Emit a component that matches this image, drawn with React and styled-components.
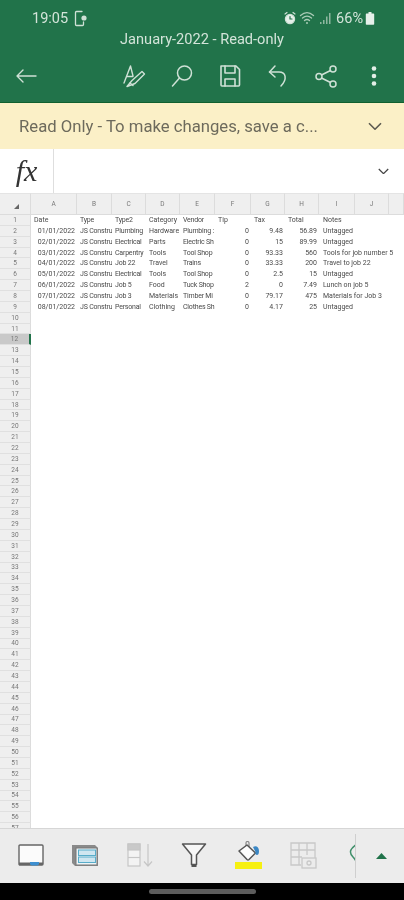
import React from 'react';
import styled, { createGlobalStyle } from 'styled-components';

const GlobalStyle = createGlobalStyle`
  html, body {
    margin: 0;
    padding: 0;
    background: #fff;
    font-family: Roboto, "Liberation Sans", sans-serif;
  }
`;

const Phone = styled.div`
  width: 404px;
  height: 900px;
  display: flex;
  flex-direction: column;
  overflow: hidden;
  filter: blur(0.55px);
`;

const Header = styled.header`
  height: 102px;
  flex: none;
  background: #21734a;
  border-bottom: 1px solid #10602f;
  color: #d3e4d9;
  display: flex;
  flex-direction: column;
`;

const StatusBar = styled.div`
  height: 20px;
  margin-top: 8px;
  padding: 0 29px 0 32px;
  display: flex;
  align-items: center;
  font-size: 14.5px;
  gap: 4px;
`;

const StatusRight = styled.div`
  margin-left: auto;
  display: flex;
  align-items: center;
  gap: 2px;
`;

const Percent = styled.span`
  margin-left: 3px;
`;

const Title = styled.div`
  height: 22px;
  line-height: 22px;
  text-align: center;
  font-size: 14.6px;
`;

const ActionBar = styled.div`
  flex: 1;
  display: flex;
  align-items: center;
  padding: 0 6px 0 2px;
`;

const ActionGroup = styled.div`
  margin-left: auto;
  display: flex;
`;

const ActionButton = styled.div`
  width: 48px;
  height: 40px;
  display: flex;
  align-items: center;
  justify-content: center;
`;

const Banner = styled.div`
  height: 46px;
  flex: none;
  background: #fbf0c7;
  color: #6d6a5c;
  display: flex;
  align-items: center;
  padding: 0 22px 0 19px;
  font-size: 16.7px;
  justify-content: space-between;
`;

const FormulaBar = styled.div`
  height: 44px;
  flex: none;
  background: #fff;
  display: flex;
  align-items: center;
`;

const FxCell = styled.div`
  width: 53px;
  height: 100%;
  border-right: 1px solid #dedede;
  display: flex;
  align-items: center;
  justify-content: center;
  font-family: "Liberation Serif", serif;
  font-style: italic;
  font-size: 30px;
  color: #333;
`;

const FormulaInput = styled.div`
  flex: 1;
  display: flex;
  justify-content: flex-end;
  padding-right: 15px;
`;

const Sheet = styled.div`
  flex: 1;
  min-height: 0;
  overflow: hidden;
  background: #fff;
  display: grid;
  grid-template-columns: 31px 46px 35px 34px 34px 35px 36px 34px 34px 36px 34px 15px;
  grid-template-rows: 22px;
  grid-auto-rows: 10.87px;
  align-content: start;
  font-size: 7px;
  color: #4a4a4a;
  filter: blur(0.35px);
`;

const ColHead = styled.div`
  background: #efefef;
  border-right: 1px solid #dcdcdc;
  border-bottom: 1px solid #dcdcdc;
  border-top: 1px solid #e4e4e4;
  display: flex;
  align-items: center;
  justify-content: center;
  color: #777;
  font-size: 6.5px;
`;

const Corner = styled(ColHead)`
  padding: 5px 0 0 2px;
`;

const RowHead = styled.div`
  background: ${p => (p.$active ? '#c9c9c9' : '#efefef')};
  border-bottom: 1px solid #e0e0e0;
  border-right: ${p => (p.$active ? '2px solid #21734a' : '1px solid #dcdcdc')};
  color: #777;
  font-size: 6.5px;
  display: flex;
  align-items: center;
  justify-content: center;
`;

const Cell = styled.div`
  line-height: 10.87px;
  white-space: nowrap;
  min-width: 0;
  overflow: ${p => (p.$spill ? 'visible' : 'hidden')};
  padding: ${p => (p.$spill ? '0 0 0 4px' : p.$num ? '0 2px 0 0' : '0 0 0 3px')};
  text-align: ${p => (p.$num ? 'right' : 'left')};
  letter-spacing: ${p => (p.$tight ? '-0.2px' : '0')};
`;

const BottomBar = styled.div`
  height: 55px;
  flex: none;
  background: #ececec;
  border-top: 1px solid #d6d6d6;
  display: flex;
  align-items: center;
  box-sizing: border-box;
`;

const ToolStrip = styled.div`
  width: 355px;
  height: 100%;
  overflow: hidden;
  display: flex;
  align-items: center;
  padding-left: 4px;
  box-sizing: border-box;
  padding-bottom: 2px;
`;

const Tool = styled.div`
  flex: none;
  width: 54.3px;
  display: flex;
  flex-direction: column;
  align-items: center;
`;

const FillSwatch = styled.div`
  width: 27px;
  height: 7px;
  background: #f6f012;
  margin-top: 1px;
`;

const Divider = styled.div`
  width: 1px;
  height: 44px;
  background: #cfcfcf;
`;

const Caret = styled.div`
  flex: 1;
  display: flex;
  justify-content: center;
  padding-left: 2px;
`;

const NavBar = styled.div`
  height: 17px;
  flex: none;
  background: #000;
  display: flex;
  align-items: center;
  justify-content: center;
`;

const HomePill = styled.div`
  width: 107px;
  height: 5px;
  border-radius: 3px;
  background: #5c5c5c;
  margin-left: 1px;
`;

const Chevron = ({ w = 14, color = '#5c5a50' }) => (
  <svg width={w} height={w * 0.6} viewBox="0 0 14 8" fill="none" stroke={color} strokeWidth="1.6">
    <path d="M1 1l6 6 6-6" />
  </svg>
);

const Ico = ({ w = 24, h = 24, children, stroke = '#cfe1d6', sw = 1.5, fill = 'none' }) => (
  <svg width={w} height={h} viewBox={`0 0 ${w} ${h}`} fill={fill} stroke={stroke} strokeWidth={sw} strokeLinecap="round" strokeLinejoin="round">
    {children}
  </svg>
);

const columns = ['A', 'B', 'C', 'D', 'E', 'F', 'G', 'H', 'I', 'J', ''];

// vendor and type strings are cut the way the narrow columns cut them
const rows = [
  ['Date', 'Type', 'Type2', 'Category', 'Vendor', 'Tip', 'Tax', 'Total', 'Notes'],
  ['01/01/2022', 'JS Constru', 'Plumbing', 'Hardware', 'Plumbing :', '0', '9.48', '56.89', 'Untagged'],
  ['02/01/2022', 'JS Constru', 'Electrical', 'Parts', 'Electric Sh', '0', '15', '89.99', 'Untagged'],
  ['03/01/2022', 'JS Constru', 'Carpentry', 'Tools', 'Tool Shop', '0', '93.33', '560', 'Tools for job number 5'],
  ['04/01/2022', 'JS Constru', 'Job 22', 'Travel', 'Trains', '0', '33.33', '200', 'Travel to job 22'],
  ['05/01/2022', 'JS Constru', 'Electrical', 'Tools', 'Tool Shop', '0', '2.5', '15', 'Untagged'],
  ['06/01/2022', 'JS Constru', 'Job 5', 'Food', 'Tuck Shop', '2', '0', '7.49', 'Lunch on job 5'],
  ['07/01/2022', 'JS Constru', 'Job 3', 'Materials', 'Timber Mi', '0', '79.17', '475', 'Materials for Job 3'],
  ['08/01/2022', 'JS Constru', 'Personal', 'Clothing', 'Clothes Sh', '0', '4.17', '25', 'Untagged'],
];

const numericCols = [5, 6, 7];
const tightCols = [1, 2, 4];
const rowCount = 57;

function App() {
  return (
    <Phone>
      <GlobalStyle />
      <Header>
        <StatusBar>
          19:05
          <Ico w={16} h={18} sw={1.3}>
            <path d="M10 2.500H4.500a1 1 0 0 0-1 1v12a1 1 0 0 0 1 1h6a1 1 0 0 0 1-1v-2.500" />
            <circle cx="12" cy="9" r="2.600" fill="#cfe1d6" stroke="none" />
          </Ico>
          <StatusRight>
            <Ico w={14} h={14} sw={1.2}>
              <circle cx="7" cy="8" r="4.600" fill="#e6f0ea" />
              <path d="M2 3l2-1.500M12 3l-2-1.500" />
              <path d="M7 5.500V8h2" stroke="#21734a" />
            </Ico>
            <Ico w={18} h={14} sw={1.3} stroke="#a9cbb6">
              <path d="M1.500 4.500c4-3.500 9-3.500 13 0M3.500 7c3-2.500 6-2.500 9 0M5.500 9.500c1.500-1.200 3.500-1.200 5 0" />
              <circle cx="8" cy="12" r="1" fill="#a9cbb6" stroke="none" />
            </Ico>
            <Ico w={12} h={14} stroke="none" fill="#8fb7a0">
              <path d="M1 13h1.500v-2H1zM4 13h1.500V9H4zM7 13h1.500V5.500H7zM10 13h1.500V2H10z" />
            </Ico>
            <Percent>66%</Percent>
            <Ico w={10} h={14} stroke="none" fill="#e6f0ea">
              <path d="M3.500 1h3v1.500h2a.7.7 0 0 1 .7.7V13a.7.7 0 0 1-.7.7H1.500A.7.7 0 0 1 .8 13V3.200a.7.7 0 0 1 .7-.7h2z" />
            </Ico>
          </StatusRight>
        </StatusBar>
        <Title>January-2022 - Read-only</Title>
        <ActionBar>
          <ActionButton>
            <Ico w={24} h={16} sw={1.4}>
              <path d="M22 8H3M9 2L3 8l6 6" />
            </Ico>
          </ActionButton>
          <ActionGroup>
            <ActionButton>
              <Ico w={24} h={24} sw={1.4}>
                <path d="M2 19L8.500 2l2.500 10M4.500 12.500H11" />
                <path d="M5 22.500l5-6 10-9 2.500 2.500-9.500 9.500z" />
                <path d="M8 19l3 2.500" />
              </Ico>
            </ActionButton>
            <ActionButton>
              <Ico w={24} h={24} sw={1.5}>
                <circle cx="14.500" cy="9" r="7" />
                <path d="M9.500 14L2.500 22" />
              </Ico>
            </ActionButton>
            <ActionButton>
              <Ico w={24} h={24} sw={1.6}>
                <path d="M3 2h15l3.500 3.500V21a1 1 0 0 1-1 1H4a1 1 0 0 1-1-1z" />
                <path d="M7 2v7h10V2M7 22v-7h10v7" />
              </Ico>
            </ActionButton>
            <ActionButton>
              <Ico w={24} h={24} sw={1.5}>
                <path d="M9 2L3.500 8 9 13" />
                <path d="M3.500 8H13c7 0 8.500 7 2 14" />
              </Ico>
            </ActionButton>
            <ActionButton>
              <Ico w={24} h={24} sw={1.5}>
                <circle cx="19" cy="5" r="3" />
                <circle cx="5" cy="12.500" r="3" />
                <circle cx="19" cy="20" r="3" />
                <path d="M16.500 6.500L7.500 11M7.500 14l9 4.500" />
              </Ico>
            </ActionButton>
            <ActionButton>
              <Ico w={6} h={22} stroke="none" fill="#e3eee7">
                <circle cx="3" cy="3.500" r="2.300" />
                <circle cx="3" cy="11" r="2.300" />
                <circle cx="3" cy="18.500" r="2.300" />
              </Ico>
            </ActionButton>
          </ActionGroup>
        </ActionBar>
      </Header>

      <Banner>
        <span>Read Only - To make changes, save a c...</span>
        <Chevron />
      </Banner>

      <FormulaBar>
        <FxCell>fx</FxCell>
        <FormulaInput>
          <Chevron w={11} color="#444" />
        </FormulaInput>
      </FormulaBar>

      <Sheet>
        <Corner>
          <svg width="5" height="5" viewBox="0 0 6 6"><path d="M6 0v6H0z" fill="#666" /></svg>
        </Corner>
        {columns.map((c, i) => <ColHead key={i}>{c}</ColHead>)}
        {Array.from({ length: rowCount }, (_, r) => (
          <React.Fragment key={r}>
            <RowHead $active={r === 11} style={{ gridColumn: 1, gridRow: r + 2 }}>{r + 1}</RowHead>
            {rows[r] && rows[r].map((v, c) => (
              <Cell
                key={c}
                style={{ gridColumn: c + 2, gridRow: r + 2 }}
                $num={r > 0 && (c === 0 || numericCols.includes(c))}
                $spill={c === 8}
                $tight={tightCols.includes(c)}
              >
                {v}
              </Cell>
            ))}
          </React.Fragment>
        ))}
      </Sheet>

      <BottomBar>
        <ToolStrip>
          <Tool>
            <svg width="28" height="24" viewBox="0 0 28 24">
              <rect x="2" y="2" width="24" height="20" rx="1" fill="#fbfbfb" stroke="#666" strokeWidth="1.400" />
              <path d="M2 19.500h24V22H2z" fill="#666" />
              <path d="M13 19h9v1.500a2 2 0 0 1-2 2h-5a2 2 0 0 1-2-2z" fill="#3d8fd0" />
            </svg>
          </Tool>
          <Tool>
            <svg width="28" height="24" viewBox="0 0 28 24" fill="none">
              <path d="M1 2h23l3 3v18H4l-3-3z" fill="#8a8a8a" />
              <rect x="5" y="5" width="21" height="17" fill="#eef4f6" stroke="#777" />
              <rect x="7.500" y="7" width="17" height="5.500" fill="#cfe6f0" stroke="#57acc9" />
              <rect x="7.500" y="14" width="17" height="5.500" fill="#cfe6f0" stroke="#57acc9" />
            </svg>
          </Tool>
          <Tool>
            <svg width="28" height="26" viewBox="0 0 28 26" fill="none" stroke="#c6c6c6" strokeWidth="1.200">
              <rect x="2" y="2" width="12" height="22" fill="#f3f3f3" />
              <path d="M2 15.500h12" />
              <rect x="2" y="2" width="12" height="6" fill="#c9c9c9" />
              <path d="M22 2v22M18 19.500l4 4.500 4-4.500" />
            </svg>
          </Tool>
          <Tool>
            <svg width="26" height="26" viewBox="0 0 26 26" fill="none">
              <path d="M1.500 2h23l-9 11v9.500h-5V13z" fill="#f7f7f7" stroke="#555" strokeWidth="1.500" strokeLinejoin="round" />
              <path d="M10.500 24h5" stroke="#444" strokeWidth="1.800" />
            </svg>
          </Tool>
          <Tool>
            <svg width="27" height="20" viewBox="0 0 27 20">
              <path d="M11 7V2c0-2 3-2 3 0v6" fill="none" stroke="#888" strokeWidth="1.200" />
              <path d="M4 10l8-6 8.500 8-6.500 6.500a1.500 1.500 0 0 1-2 0z" fill="#fdfdfd" stroke="#555" strokeWidth="1.500" strokeLinejoin="round" />
              <path d="M18 6c3-2 6 0 6 4 0 3-1 4-2 4s-2-1-1.500-3z" fill="#3b87c4" />
            </svg>
            <FillSwatch />
          </Tool>
          <Tool>
            <svg width="28" height="28" viewBox="0 0 28 28" fill="none" stroke="#c8c8c8" strokeWidth="1.300">
              <path d="M12 24H2V2h24v16" />
              <path d="M2 9h24M2 16h11M10 2v22M18 2v12" />
              <rect x="13" y="17" width="14" height="10" fill="#ececec" />
              <circle cx="20" cy="22" r="2" />
            </svg>
          </Tool>
          <Tool>
            <svg width="24" height="30" viewBox="0 0 24 30" fill="none" stroke="#3f8f6a" strokeWidth="1.500">
              <path d="M12 4C6 8 3 12 8 17c3 3 4 5 4 9" />
            </svg>
          </Tool>
        </ToolStrip>
        <Divider />
        <Caret>
          <svg width="11" height="6" viewBox="0 0 11 6"><path d="M0 6L5.500 0 11 6z" fill="#21734a" /></svg>
        </Caret>
      </BottomBar>

      <NavBar>
        <HomePill />
      </NavBar>
    </Phone>
  );
}

export default App;
